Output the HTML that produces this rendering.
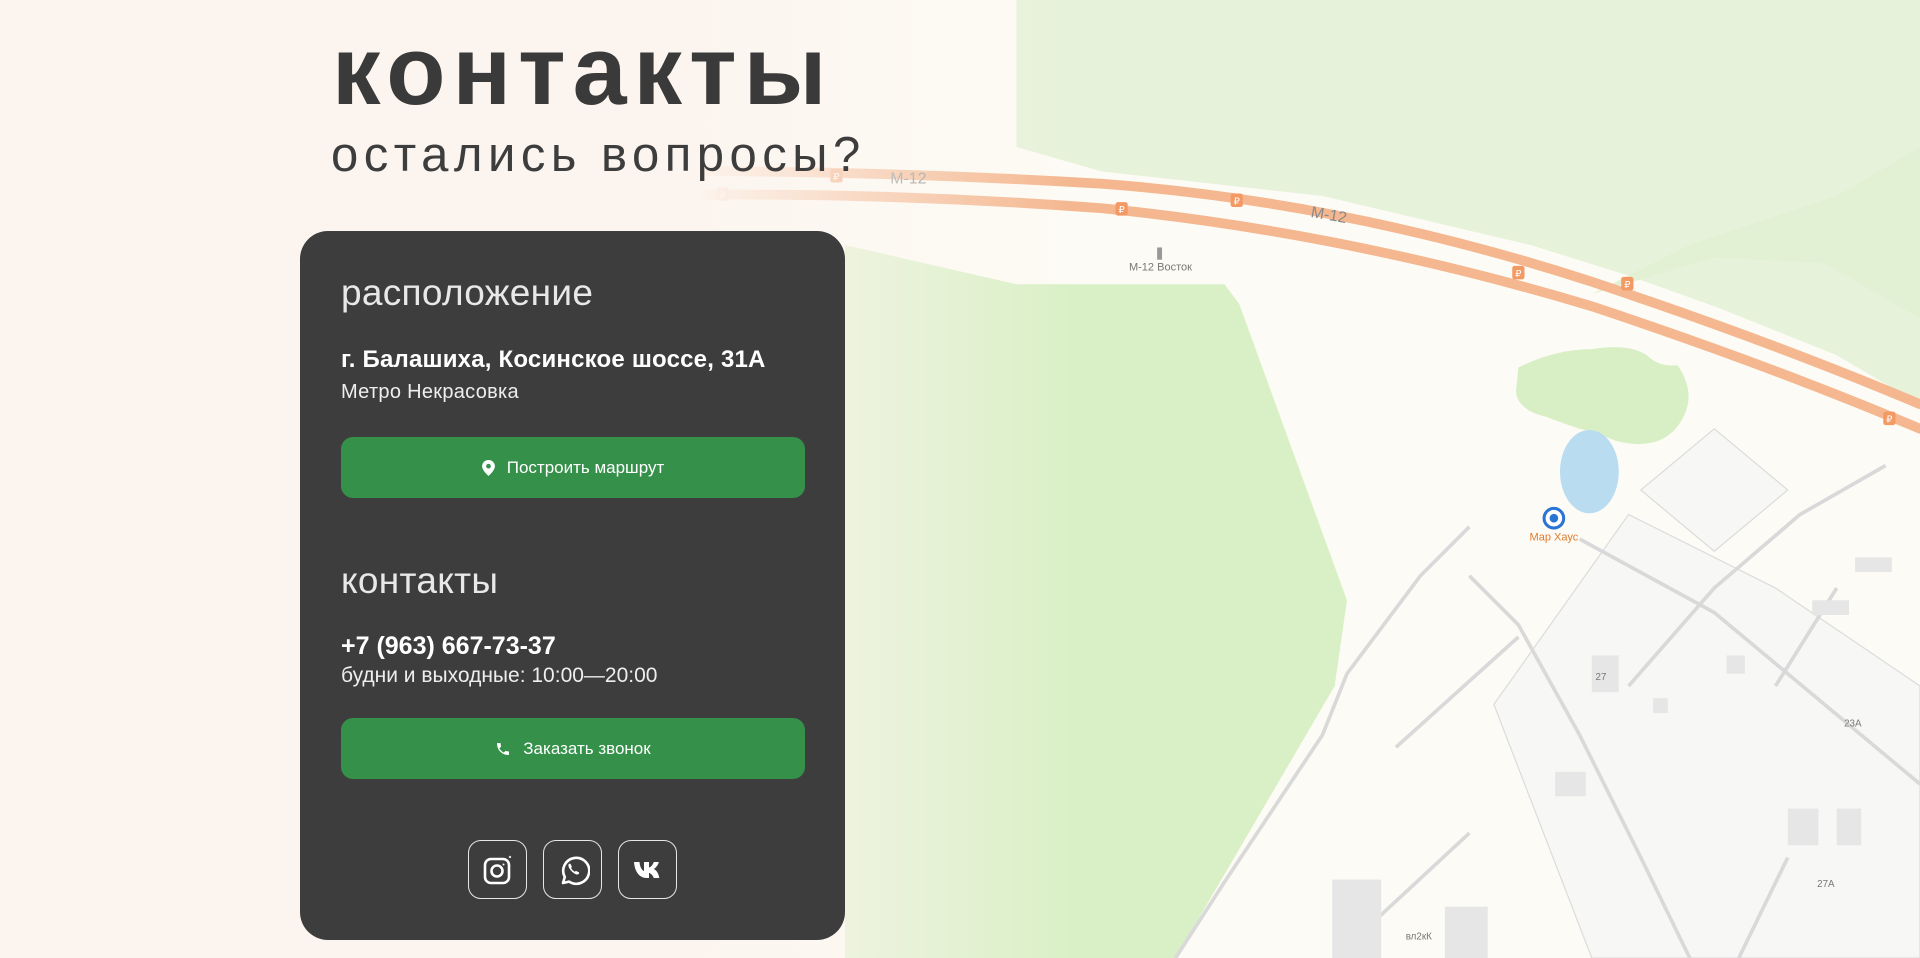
<!DOCTYPE html>
<html><head><meta charset="utf-8">
<style>
*{margin:0;padding:0;box-sizing:border-box}
html,body{width:1920px;height:958px;overflow:hidden;background:#fcf6f0;font-family:"Liberation Sans","DejaVu Sans",sans-serif}
#map{position:absolute;left:0;top:0;width:1920px;height:958px}
#fade{position:absolute;left:0;top:0;width:1920px;height:958px;background:linear-gradient(90deg,#fcf5ef 0%,#fcf5ef 36%,rgba(252,245,239,0.6) 44%,rgba(252,245,239,0) 56%)}
.t{position:absolute;white-space:nowrap;color:#3d3d3d;line-height:1}
#h1{left:332px;top:22px;font-size:97px;font-weight:bold;letter-spacing:7px;color:#3a3a3a}
#h2{left:331px;top:131px;font-size:49px;letter-spacing:5.5px;color:#3d3d3d}
#card{position:absolute;left:300px;top:231px;width:545px;height:709px;background:#3d3d3d;border-radius:28px}
.c{position:absolute;white-space:nowrap;color:#fff;line-height:1}
.hd{font-size:37px;color:#e8e8e8;letter-spacing:0.3px}
.btn{position:absolute;left:41px;width:464px;height:61px;background:#35904a;border-radius:12px;color:#fff;font-size:17px;display:flex;align-items:center;justify-content:center;gap:12px}
.soc{position:absolute;top:609px;width:59px;height:59px;border:1.5px solid #e6e6e6;border-radius:13px;display:flex;align-items:center;justify-content:center}
</style></head><body>
<svg id="map" viewBox="0 0 1568 782" preserveAspectRatio="none">
<rect width="1568" height="782" fill="#fdfbf5"/>
<path d="M830 0 L1568 0 L1568 330 L1500 290 L1400 250 L1330 225 L1250 200 L1080 160 L900 140 L830 120 Z" fill="#e6f2d9"/>
<path d="M1300 240 L1400 210 L1490 215 L1568 260 L1568 120 L1500 160 L1380 200 Z" fill="#e2f0d3"/>
<path d="M690 200 L830 232 L1000 232 L1012 248 L1100 490 L1090 560 L960 782 L690 782 Z" fill="#d9f0c6"/>
<path d="M1240 300 Q1270 285 1300 285 Q1330 280 1345 290 Q1355 300 1370 298 Q1385 320 1375 340 Q1360 370 1320 360 Q1300 352 1290 350 Q1275 345 1262 340 Q1240 335 1238 320 Z" fill="#d8efc6"/>
<ellipse cx="1298" cy="385" rx="24" ry="34" fill="#b9dcf1"/>
<g fill="none" stroke="#f4b78f" stroke-width="8" stroke-linecap="round">
<path d="M500 140 Q700 138 900 150 Q1100 165 1300 230 Q1450 280 1568 330"/>
<path d="M500 160 Q700 155 900 170 Q1100 190 1300 250 Q1450 300 1568 350"/>
</g>
<g fill="#f39a64">
<rect x="585" y="153" width="10" height="11" rx="2"/><rect x="678" y="138" width="10" height="11" rx="2"/>
<rect x="911" y="165" width="10" height="11" rx="2"/><rect x="1005" y="158" width="10" height="11" rx="2"/>
<rect x="1235" y="217" width="10" height="11" rx="2"/><rect x="1324" y="226" width="10" height="11" rx="2"/>
<rect x="1538" y="336" width="10" height="11" rx="2"/>
</g>
<g fill="#fff" font-size="8" font-family="DejaVu Sans" text-anchor="middle">
<text x="590" y="162">₽</text><text x="683" y="147">₽</text><text x="916" y="174">₽</text><text x="1010" y="167">₽</text>
<text x="1240" y="226">₽</text><text x="1329" y="235">₽</text><text x="1543" y="345">₽</text>
</g>
<text x="727" y="150" font-size="13" fill="#8a8a8a" font-family="Liberation Sans">М-12</text>
<text x="1070" y="177" font-size="13" fill="#8a8a8a" font-family="Liberation Sans" transform="rotate(10 1070 177)">М-12</text>
<text x="922" y="221" font-size="9" fill="#777" font-family="Liberation Sans">М-12 Восток</text>
<rect x="945" y="202" width="4" height="10" fill="#999"/>
<g fill="#f7f7f6" stroke="#dcdcdc" stroke-width="1">
<path d="M1220 575 L1330 420 L1450 480 L1568 560 L1568 782 L1300 782 Z"/>
<path d="M1340 400 L1400 350 L1460 400 L1400 450 Z"/>
</g>
<g fill="none" stroke="#d9d9d9" stroke-width="3">
<path d="M1290 440 L1400 500 L1568 640"/>
<path d="M960 782 L1000 720 L1080 600 L1100 550 L1160 470 L1200 430"/>
<path d="M1200 470 L1240 510 L1290 600 L1340 700 L1380 782"/>
<path d="M1140 610 L1240 520"/>
<path d="M1330 560 L1400 480 L1470 420 L1540 380"/>
<path d="M1450 560 L1500 480"/>
<path d="M1090 782 L1200 680"/>
<path d="M1420 782 L1460 700"/>
</g>
<g fill="#e6e6e6">
<rect x="1300" y="535" width="22" height="30"/><rect x="1410" y="535" width="15" height="15"/>
<rect x="1460" y="660" width="25" height="30"/><rect x="1500" y="660" width="20" height="30"/>
<rect x="1088" y="718" width="40" height="64"/><rect x="1180" y="740" width="35" height="42"/>
<rect x="1480" y="490" width="30" height="12"/><rect x="1515" y="455" width="30" height="12"/>
<rect x="1270" y="630" width="25" height="20"/><rect x="1350" y="570" width="12" height="12"/>
</g>
<text x="1506" y="593" font-size="8" fill="#777" font-family="Liberation Sans">23А</text>
<text x="1303" y="555" font-size="8" fill="#777" font-family="Liberation Sans">27</text>
<text x="1484" y="724" font-size="8" fill="#777" font-family="Liberation Sans">27А</text>
<text x="1148" y="767" font-size="8" fill="#777" font-family="Liberation Sans">вл2кК</text>
<circle cx="1269" cy="423" r="8" fill="#fff" stroke="#2a74d4" stroke-width="2.5"/>
<circle cx="1269" cy="423" r="3.5" fill="#2a74d4"/>
<text x="1269" y="441" font-size="9" fill="#e07a2c" text-anchor="middle" font-family="Liberation Sans">Мар Хаус</text>
</svg>
<div id="fade"></div>
<div class="t" id="h1">контакты</div>
<div class="t" id="h2">остались вопросы?</div>
<div id="card">
<div class="c hd" style="left:41px;top:43px">расположение</div>
<div class="c" style="left:41px;top:117px;font-size:24px;font-weight:bold;letter-spacing:0.2px">г. Балашиха, Косинское шоссе, 31А</div>
<div class="c" style="left:41px;top:151px;font-size:20px;color:#eee;letter-spacing:0.3px">Метро Некрасовка</div>
<div class="btn" style="top:206px"><svg width="13" height="16" viewBox="0 0 12 15"><path d="M6 0C2.7 0 0 2.6 0 5.8 0 10 6 15 6 15s6-5 6-9.2C12 2.6 9.3 0 6 0z" fill="#fff"/><circle cx="6" cy="5.8" r="2.2" fill="#35904a"/></svg><span>Построить маршрут</span></div>
<div class="c hd" style="left:41px;top:331px">контакты</div>
<div class="c" style="left:41px;top:403px;font-size:25px;font-weight:bold">+7 (963) 667-73-37</div>
<div class="c" style="left:41px;top:434px;font-size:21px;color:#eee">будни и выходные: 10:00—20:00</div>
<div class="btn" style="top:487px"><svg width="16" height="16" viewBox="0 0 24 24"><path d="M6.6 10.8c1.4 2.8 3.8 5.1 6.6 6.6l2.2-2.2c.3-.3.7-.4 1-.2 1.1.4 2.3.6 3.6.6.6 0 1 .4 1 1V20c0 .6-.4 1-1 1C10.6 21 3 13.4 3 4c0-.6.4-1 1-1h3.5c.6 0 1 .4 1 1 0 1.3.2 2.5.6 3.6.1.3 0 .7-.2 1l-2.3 2.2z" fill="#fff"/></svg><span>Заказать звонок</span></div>
<div class="soc" style="left:168px"><svg width="32" height="32" viewBox="0 0 32 32" fill="none" stroke="#fff" stroke-width="2.6"><rect x="3" y="5" width="24" height="24" rx="6"/><circle cx="15" cy="17" r="5.5"/><circle cx="21.5" cy="10.5" r="1" fill="#fff" stroke="none"/><circle cx="28" cy="3" r="1.2" fill="#ddd" stroke="none"/></svg></div>
<div class="soc" style="left:243px"><svg width="34" height="34" viewBox="0 0 34 34" fill="none" stroke="#fff" stroke-width="2.6"><path d="M7 30l1.8-6A13 13 0 1 1 13 28.6z" stroke-linejoin="round"/><path d="M12.5 11.5c.5-1 1.5-1.2 2-.5l1.2 2.3c.3.6 0 1.1-.6 1.6.8 1.8 2 3 3.8 3.8.5-.6 1-.9 1.6-.6l2.3 1.2c.7.5.5 1.5-.5 2-3 1.6-10.8-5.8-9.8-9.8z" fill="#fff" stroke="none"/></svg></div>
<div class="soc" style="left:318px"><svg width="30" height="20" viewBox="0 0 30 20"><path d="M1 2h5.5c.5 6 3 8.5 4.5 9V2h5v5.5c2-.3 4-3 4.8-5.5h5c-.7 3.3-3.3 6-5 7 1.7.8 4.5 3 5.5 9h-5.5c-.9-2.6-3-4.8-4.8-5v5H14C6.5 18 1.8 12 1 2z" fill="#fff"/></svg></div>
</div>
</body></html>
